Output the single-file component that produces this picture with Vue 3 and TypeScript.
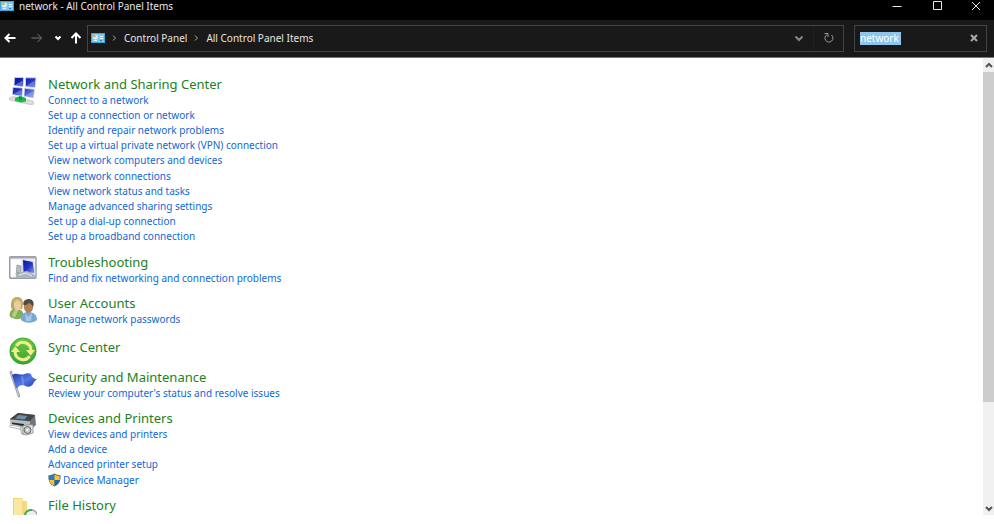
<script setup lang="ts">
import { ref } from 'vue'

interface Task {
  label: string
  shield?: boolean
}
interface Category {
  id: string
  title: string
  tasks: Task[]
  centered?: boolean
}

const query = ref('network')

const categories: Category[] = [
  {
    id: 'network',
    title: 'Network and Sharing Center',
    tasks: [
      { label: 'Connect to a network' },
      { label: 'Set up a connection or network' },
      { label: 'Identify and repair network problems' },
      { label: 'Set up a virtual private network (VPN) connection' },
      { label: 'View network computers and devices' },
      { label: 'View network connections' },
      { label: 'View network status and tasks' },
      { label: 'Manage advanced sharing settings' },
      { label: 'Set up a dial-up connection' },
      { label: 'Set up a broadband connection' },
    ],
  },
  {
    id: 'troubleshooting',
    title: 'Troubleshooting',
    tasks: [{ label: 'Find and fix networking and connection problems' }],
  },
  { id: 'users', title: 'User Accounts', tasks: [{ label: 'Manage network passwords' }] },
  { id: 'sync', title: 'Sync Center', tasks: [], centered: true },
  {
    id: 'security',
    title: 'Security and Maintenance',
    tasks: [{ label: "Review your computer's status and resolve issues" }],
  },
  {
    id: 'devices',
    title: 'Devices and Printers',
    tasks: [
      { label: 'View devices and printers' },
      { label: 'Add a device' },
      { label: 'Advanced printer setup' },
      { label: 'Device Manager', shield: true },
    ],
  },
  { id: 'history', title: 'File History', tasks: [] },
]
</script>

<template>
  <div class="window">
    <header class="titlebar">
      <svg class="panel-icon" viewBox="0 0 14 10" aria-hidden="true">
        <rect width="14" height="10" fill="#3fa4da" />
        <rect x="1" y="1" width="12" height="8" fill="#7cc8ef" />
        <circle cx="4.5" cy="4" r="2.500" fill="#d5edf9" />
        <path d="M4.500 4V1.500A2.500 2.500 0 0 0 2 4z" fill="#e2a52e" />
        <path d="M9 3.500h3M9 5.500h3M3 7.500h3" stroke="#e8f6fd" />
        <path d="M9 7.500h2" stroke="#2879b8" />
      </svg>
      <h1 class="title">network - All Control Panel Items</h1>
      <div class="caption-buttons">
        <button type="button" aria-label="Minimize">
          <svg viewBox="0 0 10 10"><path d="M0.500 5.500h9" /></svg>
        </button>
        <button type="button" aria-label="Maximize">
          <svg viewBox="0 0 10 10"><path d="M.5 .5h8v8h-8z" /></svg>
        </button>
        <button type="button" aria-label="Close">
          <svg viewBox="0 0 10 10"><path d="M1 1l8 8M9 1l-8 8" /></svg>
        </button>
      </div>
    </header>

    <nav class="toolbar" aria-label="Navigation">
      <div class="history">
        <button type="button" aria-label="Back">
          <svg viewBox="0 0 12 12"><path d="M11.500 6H1.500M5.500 2L1.500 6l4 4" /></svg>
        </button>
        <button type="button" class="dim" aria-label="Forward">
          <svg viewBox="0 0 12 12"><path d="M0.500 6h10M6.500 2l4 4-4 4" /></svg>
        </button>
        <button type="button" class="recent" aria-label="Recent locations">
          <svg viewBox="0 0 12 12"><path d="M3.500 4.500L6 7l2.500-2.500" /></svg>
        </button>
        <button type="button" aria-label="Up">
          <svg viewBox="0 0 12 12"><path d="M6 11.500V1.500M1.500 6L6 1.500 10.500 6" /></svg>
        </button>
      </div>
      <div class="address">
        <svg class="panel-icon" viewBox="0 0 14 10" aria-hidden="true">
          <rect width="14" height="10" fill="#3fa4da" />
          <rect x="1" y="1" width="12" height="8" fill="#7cc8ef" />
          <circle cx="4.5" cy="4" r="2.500" fill="#d5edf9" />
          <path d="M4.500 4V1.500A2.500 2.500 0 0 0 2 4z" fill="#e2a52e" />
          <path d="M9 3.500h3M9 5.500h3M3 7.500h3" stroke="#e8f6fd" />
          <path d="M9 7.500h2" stroke="#2879b8" />
        </svg>
        <svg class="crumb-arrow" viewBox="0 0 6 8" aria-hidden="true"><path d="M2 1.500L4.500 4 2 6.500" /></svg>
        <a href="#control-panel">Control Panel</a>
        <svg class="crumb-arrow" viewBox="0 0 6 8" aria-hidden="true"><path d="M2 1.500L4.500 4 2 6.500" /></svg>
        <a href="#all-items">All Control Panel Items</a>
        <button type="button" class="drop" aria-label="Previous locations">
          <svg viewBox="0 0 12 12"><path d="M2.500 4.500L6 8l3.500-3.500" /></svg>
        </button>
        <button type="button" class="refresh" aria-label="Refresh">
          <svg viewBox="0 0 12 12"><path d="M8.500 3A4 4 0 1 1 4 2.600M1.500 1.500h3.500v3.500" /></svg>
        </button>
      </div>
      <div class="search">
        <input v-model="query" type="text" aria-label="Search Control Panel" />
        <button type="button" aria-label="Clear search" @click="query = ''">
          <svg viewBox="0 0 12 12"><path d="M3 3l6 6M9 3l-6 6" /></svg>
        </button>
      </div>
    </nav>

    <div class="body">
      <main class="results">
        <section v-for="c in categories" :key="c.id" class="category">
          <svg class="icon" viewBox="0 0 28 28" aria-hidden="true">
            <defs>
              <linearGradient id="screen" x1="0" y1="0" x2="1" y2="1">
                <stop offset="0" stop-color="#0713a0" /><stop offset=".5" stop-color="#2334c0" /><stop offset="1" stop-color="#8fa8ef" />
              </linearGradient>
              <linearGradient id="flag" x1="0" y1="0" x2="1" y2="1">
                <stop offset="0" stop-color="#2638a8" /><stop offset=".5" stop-color="#547ae5" /><stop offset="1" stop-color="#1730a4" />
              </linearGradient>
              <linearGradient id="green" x1="0" y1="0" x2="0" y2="1">
                <stop offset="0" stop-color="#6fca45" /><stop offset="1" stop-color="#35a536" />
              </linearGradient>
            </defs>
            <g v-if="c.id === 'network'">
              <path d="M.5 20.500l4-1L24 24l1 3-3 .8L.5 23z" fill="#d9dddc" stroke="#b4bab9" stroke-width=".6" />
              <path d="M6 21l5-2 6 2v3.500l-5 1-6-1.500z" fill="#20b64a" />
              <path d="M11.500 18.500v4" stroke="#079639" stroke-width="3" />
              <g fill="url(#screen)" stroke="#d5dcec" stroke-width=".8">
                <path d="M5.500 .5h9L14 9.500l-9-1zM16.500 .8H27L26 10.500l-9.500-1zM4 10.300l9.500 .8-.5 8L3.300 17.500zM15.500 11.300l10 1-1 8.700-9.500-1.800z" />
              </g>
              <path d="M6 8l7.500-4.500-.3 5.300zM17.300 9l8.500-5.500-.8 6.300zM4.300 17l8.400-4.500-.3 5.800zM15.800 18.700l8.700-4.700-.7 6.200z" fill="#9db0f0" opacity=".5" />
            </g>
            <g v-else-if="c.id === 'troubleshooting'">
              <rect x=".7" y="1.700" width="26.300" height="21.600" rx="1" fill="#f0f1f6" stroke="#989ba8" stroke-width="1.400" />
              <path d="M1 2.500h26" stroke="#a3a4b2" stroke-width="2" />
              <path d="M2 5h10v16H2z" fill="#fff" />
              <path d="M13.500 4.500l10.500 2 2 12-12-1z" fill="url(#screen)" stroke="#dbe0f0" />
              <path d="M8 10l4 1v10l-5-1z" fill="#b7bec0" stroke="#7d8588" stroke-width=".6" />
              <path d="M7 18l11-2 8 4v3H7z" fill="#aeb3bc" />
              <path d="M10 20l7-2 6 3" stroke="#e9ecef" fill="none" />
              <path d="M8 18h2" stroke="#48b255" />
            </g>
            <g v-else-if="c.id === 'users'">
              <path d="M.5 20c0-5 2-7 6.500-8 5 1 8 4 8 9-4 3-11 3-14.500-1z" fill="#85ae5a" />
              <path d="M3 19c2-4 3-6 6-6-1 5-2 7-4 9z" fill="#b3cf86" />
              <path d="M2.500 13C1 6 3 1 8 1c6 0 7 6 5 12z" fill="#b8a65d" />
              <ellipse cx="8.500" cy="9" rx="3.700" ry="5.500" fill="#edcba2" />
              <path d="M4 8c2-1 3-3 4-4 2 2 4 2 5 4 0-6-9-8-9 0z" fill="#cdbb70" />
              <path d="M12 24c0-6 3-8 7-8 6 0 9 3 9 8-4 3.500-12 3.500-16 0z" fill="#78a8d2" />
              <path d="M16 17l3 4 4-4-1 8h-5z" fill="#a5c9e5" />
              <ellipse cx="19.500" cy="10.500" rx="4.700" ry="6.500" fill="#b78058" />
              <path d="M14.500 9c-1-4 2-6 6-6 4 1 5 4 3.500 8-2-3-2.500-4-4.500-4-1 2-3 2-5 2z" fill="#514a43" />
            </g>
            <g v-else-if="c.id === 'sync'">
              <circle cx="14" cy="14" r="13.500" fill="url(#green)" />
              <circle cx="14" cy="14" r="12.800" fill="none" stroke="#2f9f30" opacity=".6" />
              <g fill="none" stroke="#f5ec8b" stroke-width="3">
                <path d="M7.300 8.800A8 8 0 0 1 21.900 13.500" />
                <path d="M20.700 19.200A8 8 0 0 1 6.100 14.500" />
              </g>
              <path d="M17 13h9l-4.300 5.800zM11 15H2l4.300-5.800z" fill="#f5ec8b" />
            </g>
            <g v-else-if="c.id === 'security'">
              <path d="M2 3l8 23" stroke="#8d949d" stroke-width="2.400" stroke-linecap="round" />
              <path d="M2 3l8 23" stroke="#e5e8ed" stroke-width=".8" />
              <circle cx="2" cy="2" r="1.500" fill="#aab0b7" />
              <path d="M3 5c4-3 8 0 11-.5 4-1 6-2 8 0 1 3 3 4 6 5-4 2-3 5-6 6.500-4 2-6-1-9-1-3 0-4 3-6 3.500z" fill="url(#flag)" />
              <path d="M13 6c1 4 1 6 1 9" stroke="#8aa4ee" stroke-width="2" fill="none" opacity=".5" />
            </g>
            <g v-else-if="c.id === 'devices'">
              <path d="M1 8l8-6 17 2 1 10-4 3L1 13z" fill="#70757a" />
              <path d="M1 8l8-6 17 2-5 6z" fill="#3f454a" />
              <path d="M9.500 4l9 1-3 3.500-9.500-1z" fill="#6f8fa6" />
              <path d="M1 8.500l20 2V15L1 13z" fill="#b9bcbe" />
              <path d="M3 11.500l12 1.500v2L3 13z" fill="#24292e" />
              <path d="M1 14l13 2v3L1 16z" fill="#f8f8f8" stroke="#989b9d" stroke-width=".7" />
              <path d="M11.500 16l4-.5v8l-3-.5z" fill="#dfe1e2" stroke="#85898b" stroke-width=".6" />
              <path d="M14 14.500l10-1V22l-7 2-3-1z" fill="#e2e4e4" stroke="#777a7c" stroke-width=".7" />
              <circle cx="18.500" cy="19" r="3.500" fill="#c1c6c6" stroke="#606669" />
              <circle cx="18.500" cy="19" r="1.200" fill="#f7f7f7" />
            </g>
            <g v-else>
              <path d="M4 0h9l1 3h4v24H4z" fill="#efcf70" />
              <path d="M5 1h8v26H5z" fill="#fae8a3" />
              <path d="M13 3h5v16h-5z" fill="#f5d980" />
              <circle cx="22" cy="18" r="7" fill="#9da9a5" />
              <circle cx="22" cy="18" r="5.500" fill="#e7f0ee" />
              <path d="M16 18a6 6 0 0 1 7-6" fill="none" stroke="#46a65b" stroke-width="2" />
            </g>
          </svg>
          <div class="text">
            <h2 :class="{ centered: c.centered }">
              <a :href="'#' + c.id">{{ c.title }}</a>
            </h2>
            <ul v-if="c.tasks.length">
              <li v-for="t in c.tasks" :key="t.label" :class="{ elevated: t.shield }">
                <svg v-if="t.shield" class="shield" viewBox="0 0 14 14" aria-hidden="true">
                  <path d="M7 0c2 1 4 2 6.500 2C14 8 12 12 7 14 2 12 0 8 .5 2 3 2 5 1 7 0z" fill="#54616b" />
                  <path d="M7 1.200V7H1.300V3C4 3 5.500 2 7 1.200z" fill="#247ed0" />
                  <path d="M7 1.200V7h5.700V3C10 3 8.500 2 7 1.200z" fill="#ffc524" />
                  <path d="M1.300 7H7v5.900C4 12 2 10 1.300 7z" fill="#ffc524" />
                  <path d="M12.700 7H7v5.900c3-.9 5-2.900 5.700-5.900z" fill="#1769bb" />
                </svg>
                <a :href="'#' + c.id">{{ t.label }}</a>
              </li>
            </ul>
          </div>
        </section>
      </main>
      <div class="scrollbar">
        <button type="button" aria-label="Scroll up">
          <svg viewBox="0 0 10 10"><path d="M2 7l3-3 3 3" /></svg>
        </button>
        <div class="track"><div class="thumb"></div></div>
        <button type="button" aria-label="Scroll down">
          <svg viewBox="0 0 10 10"><path d="M2 4l3 3 3-3" /></svg>
        </button>
      </div>
    </div>
  </div>
</template>

<style>
body {
  margin: 0;
  background: #fff;
}
</style>

<style scoped>
* {
  box-sizing: border-box;
}
.window {
  display: flex;
  flex-direction: column;
  height: 100vh;
  padding-bottom: 9px;
  overflow: hidden;
  font-family: "Noto Sans", "Open Sans", sans-serif;
  font-size: 10px;
}
button {
  display: flex;
  align-items: center;
  justify-content: center;
  padding: 0;
  border: 0;
  background: none;
  color: inherit;
}
a {
  color: inherit;
  text-decoration: none;
}
a:hover {
  text-decoration: underline;
}
button svg,
.crumb-arrow {
  fill: none;
  stroke: currentColor;
}
.panel-icon {
  flex: none;
  width: 14px;
  height: 10px;
}
.titlebar {
  display: flex;
  flex: none;
  align-items: center;
  height: 20px;
  padding-bottom: 8px;
  background: #000;
  color: #e8e8e8;
}
.title {
  margin: 0 0 0 5px;
  font-size: 10px;
  font-weight: 400;
  line-height: 12px;
}
.caption-buttons {
  display: flex;
  margin-left: auto;
}
.caption-buttons button {
  width: 41px;
  height: 12px;
}
.caption-buttons button:last-child {
  width: 36px;
}
.caption-buttons svg {
  width: 10px;
  height: 10px;
}
.toolbar {
  display: flex;
  flex: none;
  align-items: center;
  height: 38px;
  padding: 0 7px 1px 3px;
  border-bottom: 1px solid #777;
  background: #191919;
  color: #e4e4e4;
}
.history {
  display: flex;
  flex: none;
  align-items: center;
  width: 84px;
}
.history button {
  width: 13px;
  height: 24px;
  color: #fff;
}
.history svg {
  width: 12px;
  height: 12px;
  stroke-width: 2;
}
.history .dim {
  margin-left: 14px;
  color: #777;
}
.history .dim svg {
  stroke-width: 1;
}
.history .recent {
  margin: 0 5px 0 8px;
}
.address {
  display: flex;
  flex: 1;
  align-items: center;
  height: 27px;
  padding-left: 3px;
  border: 1px solid #444;
}
.crumb-arrow {
  width: 6px;
  height: 8px;
  margin: 0 7px 0 6px;
  color: #aaa;
}
.drop {
  width: 29px;
  height: 25px;
  margin-left: auto;
  border-right: 1px solid #202020;
  color: #888;
}
.refresh {
  width: 29px;
  height: 25px;
  color: #999;
}
.address button svg,
.search svg {
  width: 12px;
  height: 12px;
}
.drop svg,
.search svg {
  stroke-width: 2;
}
.search {
  display: flex;
  align-items: center;
  width: 133px;
  height: 27px;
  margin-left: 10px;
  padding-left: 5px;
  border: 1px solid #444;
}
.search input {
  width: 41px;
  height: 13px;
  padding: 0;
  border: 0;
  outline: 0;
  background: #8fc5eb;
  color: #fff;
  font: inherit;
}
.search button {
  width: 24px;
  height: 25px;
  margin-left: auto;
  color: #aaa;
}
.body {
  display: flex;
  flex: 1;
  min-height: 0;
}
.results {
  display: flex;
  flex: 1;
  flex-direction: column;
  gap: 6px;
  padding: 17px 9px 0;
  overflow: hidden;
}
.category {
  display: flex;
  flex: none;
  gap: 11px;
}
.icon {
  flex: none;
  width: 28px;
  height: 28px;
  margin: 2px 0 -3px;
}
h2 {
  margin: 0;
  color: #1a821e;
  font-size: 13px;
  font-weight: 400;
  line-height: 18px;
}
h2.centered {
  line-height: 24px;
}
ul {
  margin: 0;
  padding: 0 0 2px;
  color: #0f68d6;
  line-height: 15px;
  list-style: none;
}
li:nth-child(5n) {
  padding-bottom: 1px;
}
.elevated {
  display: flex;
  align-items: center;
  gap: 2px;
  height: 16px;
}
.shield {
  width: 13px;
  height: 14px;
}
.scrollbar {
  display: flex;
  flex: none;
  flex-direction: column;
  width: 11px;
  background: #f0f0f0;
  color: #555;
}
.scrollbar button {
  height: 14px;
}
.scrollbar svg {
  width: 10px;
  height: 10px;
  stroke-width: 2;
}
.track {
  flex: 1;
}
.thumb {
  height: 77%;
  background: #cdcdcd;
}
</style>
